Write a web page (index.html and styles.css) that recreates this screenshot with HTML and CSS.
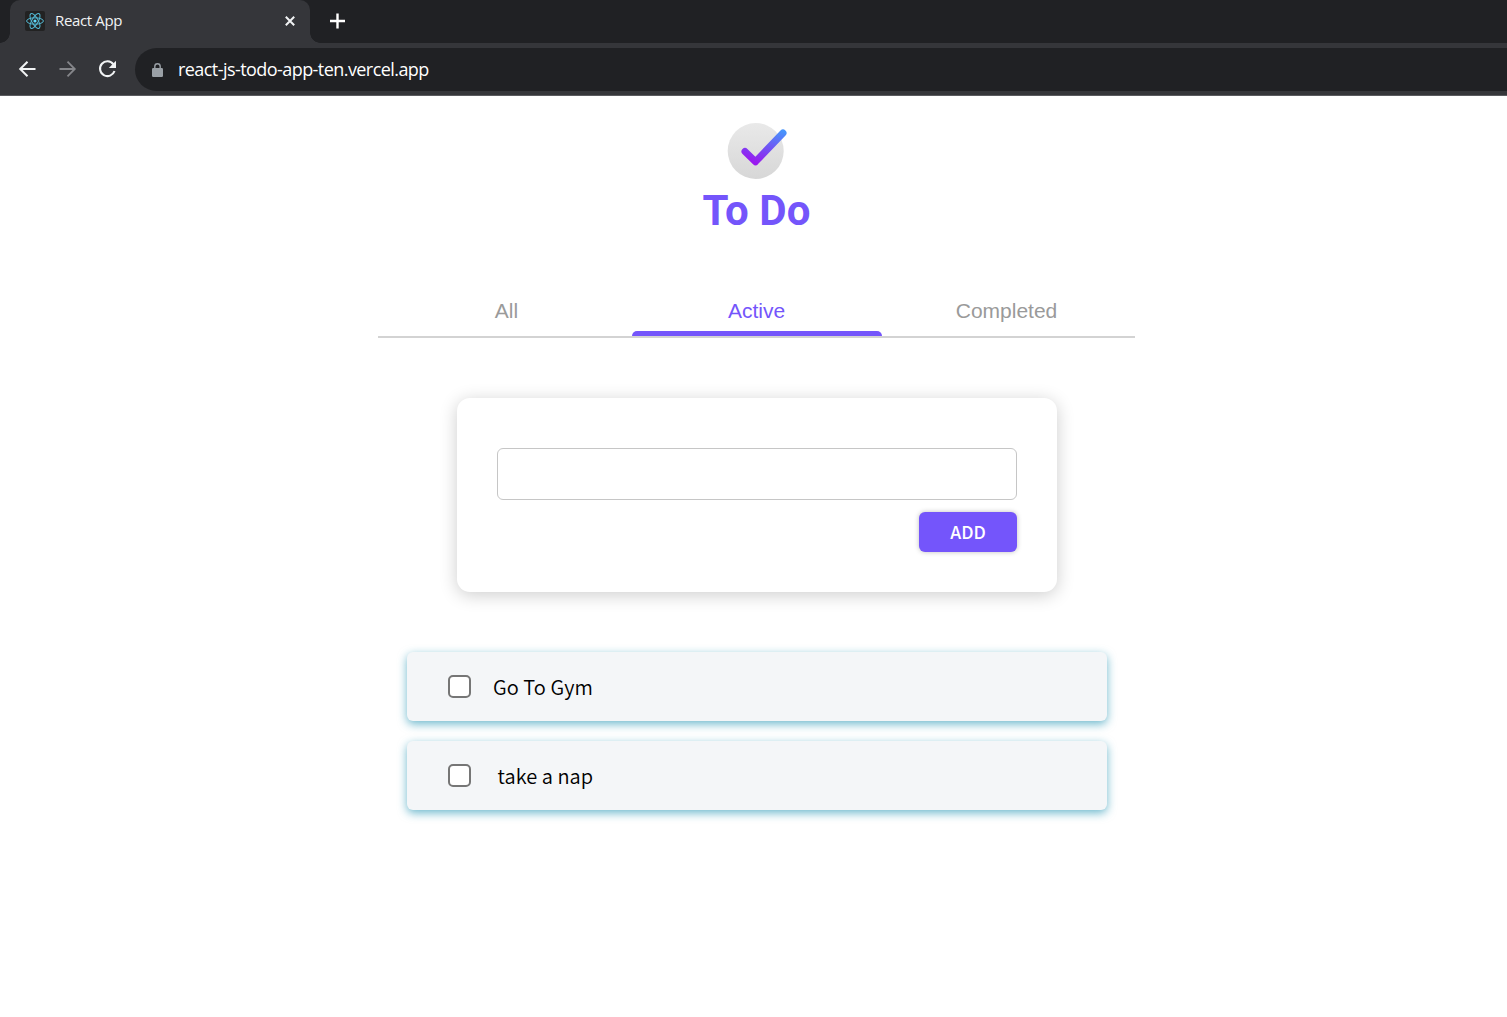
FILE: index.html
```html
<!DOCTYPE html>
<html lang="en">
<head>
<meta charset="utf-8">
<title>React App</title>
<link rel="stylesheet" href="styles.css">
</head>
<body>
<header class="browser">
  <div class="tabstrip">
    <div class="tab">
      <svg class="favicon" viewBox="0 0 20 20" width="20" height="20"><rect width="20" height="20" rx="2" fill="#222"/><g fill="none" stroke="#53b9d4" stroke-width="1"><ellipse cx="10" cy="10" rx="8.4" ry="3.2"/><ellipse cx="10" cy="10" rx="8.4" ry="3.2" transform="rotate(60 10 10)"/><ellipse cx="10" cy="10" rx="8.4" ry="3.2" transform="rotate(120 10 10)"/></g><circle cx="10" cy="10" r="1.6" fill="#61dafb"/></svg>
      <span class="tab-title">React App</span>
      <svg class="tab-close" viewBox="0 0 10 10" width="10" height="10"><path d="M.8.8l8.4 8.4M9.2.8L.8 9.2" stroke="#f1f3f4" stroke-width="2"/></svg>
    </div>
    <svg class="new-tab" viewBox="0 0 16 16" width="16" height="16"><path d="M8.5.5v15M1 8h15" stroke="#fff" stroke-width="2.4"/></svg>
  </div>
  <div class="toolbar">
    <svg class="nav" viewBox="0 0 18 18" width="18" height="18"><path d="M17.5 9h-15M9.5 1.7L2.2 9l7.3 7.3" fill="none" stroke="#f1f3f4" stroke-width="2"/></svg>
    <svg class="nav" viewBox="0 0 18 18" width="18" height="18"><path d="M1.5 9h15M9.5 1.7L16.8 9l-7.3 7.3" fill="none" stroke="#85868a" stroke-width="1.8"/></svg>
    <svg class="nav" viewBox="0 0 18 18" width="18" height="18"><path d="M15.4 4.3A7.4 7.4 0 1 0 16.5 11" fill="none" stroke="#f1f3f4" stroke-width="2.1"/><path d="M18 .8V8h-7.2z" fill="#f1f3f4"/></svg>
    <div class="address">
      <svg class="lock" viewBox="0 0 11 14" width="11" height="14"><rect y="5" width="11" height="9" rx="1.2" fill="#9aa0a6"/><path d="M2.8 6V3.5a2.7 2.7 0 0 1 5.4 0V6" fill="none" stroke="#9aa0a6" stroke-width="1.4"/></svg>
      <span class="url">react-js-todo-app-ten.vercel.app</span>
    </div>
  </div>
</header>
<main class="app">
  <svg class="logo" viewBox="0 0 60 58" width="60" height="58">
    <defs>
      <linearGradient id="disc" x1="0" y1="0" x2="0" y2="1"><stop offset="0" stop-color="#e9e9e9"/><stop offset="1" stop-color="#d7d7d7"/></linearGradient>
      <linearGradient id="check" gradientUnits="userSpaceOnUse" x1="43" y1="5" x2="30" y2="42"><stop offset="0" stop-color="#4894fb"/><stop offset=".55" stop-color="#7350f3"/><stop offset="1" stop-color="#9a18ef"/></linearGradient>
    </defs>
    <circle cx="27.7" cy="29" r="28" fill="url(#disc)"/>
    <path d="M17 29.5l10.5 10.2L55 11" fill="none" stroke="url(#check)" stroke-width="7" stroke-linecap="round" stroke-linejoin="round"/>
  </svg>
  <h1 class="title">To Do</h1>
  <nav class="filters">
    <a class="filter">All</a>
    <a class="filter filter-active">Active</a>
    <a class="filter">Completed</a>
  </nav>
  <form class="card">
    <input class="field" type="text" aria-label="New task">
    <button class="add" type="button">ADD</button>
  </form>
  <ul class="tasks">
    <li class="task"><span class="box"></span><span class="label">Go To Gym</span></li>
    <li class="task"><span class="box"></span><span class="label label-second">take a nap</span></li>
  </ul>
</main>
</body>
</html>
```
FILE: styles.css
```css
* { box-sizing: border-box; }
body { margin: 0; min-height: 1017px; background: #fff; overflow: hidden; }
svg { display: block; flex: none; overflow: visible; }

.browser { height: 96px; background: #35363a; border-bottom: 1px solid #5a5b5f; }
.tabstrip { display: flex; height: 43px; background: #202124; }
.tab {
  position: relative; display: flex; align-items: center;
  width: 300px; height: 43px; margin-left: 10px; padding: 0 15px 2px;
  background: #35363a; border-radius: 10px 10px 0 0;
}
.tab::before, .tab::after { content: ""; position: absolute; bottom: 0; width: 10px; height: 10px; }
.tab::before { left: -10px; background: radial-gradient(circle at 0 0, transparent 9.5px, #35363a 10px); }
.tab::after { right: -10px; background: radial-gradient(circle at 100% 0, transparent 9.5px, #35363a 10px); }
.tab-title { margin: -2px 0 0 10px; color: #f1f3f4; font: 15px/20px "Open Sans", sans-serif; letter-spacing: -0.35px; white-space: nowrap; }
.tab-close { margin: 1px 0 0 auto; }
.new-tab { margin: 13px 0 0 19px; }
.toolbar { display: flex; align-items: center; height: 52px; padding-left: 18px; }
.nav { margin: -1px 22px 0 0; }
.address {
  flex: 1; display: flex; align-items: center; height: 43px; margin-left: -3px;
  padding-left: 17px; background: #202124; border-radius: 22px 0 0 22px;
}
.lock { margin-top: 1px; }
.url { margin-left: 15px; color: #fff; font: 18px/24px "Open Sans", sans-serif; letter-spacing: -0.56px; white-space: nowrap; }

.app { display: flex; flex-direction: column; align-items: center; width: 757px; margin-left: 378px; padding-top: 26px; }
.logo { margin-left: 3px; }
.title { margin: 6px 0 0; color: #7455fb; font: 700 42px/50px Roboto, sans-serif; letter-spacing: 0.1px; }
.filters { display: flex; justify-content: center; width: 757px; height: 54px; margin-top: 48px; border-bottom: 2px solid #d3d3d3; }
.filter { position: relative; width: 250px; padding-top: 15px; color: #9a9a9a; font: 21px/24px "Liberation Sans", Arial, sans-serif; text-align: center; }
.filter-active { color: #7455fb; }
.filter-active::after { content: ""; position: absolute; left: 0; bottom: 0; width: 250px; height: 5px; border-radius: 5px 5px 0 0; background: #7455fb; }
.card {
  display: flex; flex-direction: column; align-items: flex-end; width: 600px; height: 194px;
  margin: 60px 0 0 1px; padding: 50px 40px 40px; border-radius: 13px; background: #fff;
  box-shadow: 0 3px 18px rgba(0, 0, 0, .2);
}
.field { width: 520px; height: 52px; border: 1px solid #c6c6c6; border-radius: 6px; background: #fff; }
.add {
  width: 98px; height: 40px; margin-top: 12px; padding: 0; border: 0; border-radius: 6px;
  background: #7455fb; color: #fff; box-shadow: 0 0 5px rgba(0, 0, 0, .25);
  font: 500 17.6px/24px "Noto Sans CJK JP", sans-serif;
}
.tasks { display: flex; flex-direction: column; gap: 20px; width: 700px; margin: 60px 0 0 1px; padding: 0; list-style: none; }
.task {
  display: flex; align-items: center; height: 69px; padding-left: 41px; border-radius: 6px;
  background: #f4f6f8; box-shadow: 0 3px 10px rgba(20, 140, 175, .62);
}
.box { width: 23px; height: 23px; margin-top: -1px; border: 2px solid #767676; border-radius: 5px; background: #fff; }
.label { margin: 0 0 0 22px; color: #000; font: 350 20px/30px "Noto Sans CJK JP", sans-serif; letter-spacing: 0.05px; }
.label-second { margin-left: 26.5px; }
```
